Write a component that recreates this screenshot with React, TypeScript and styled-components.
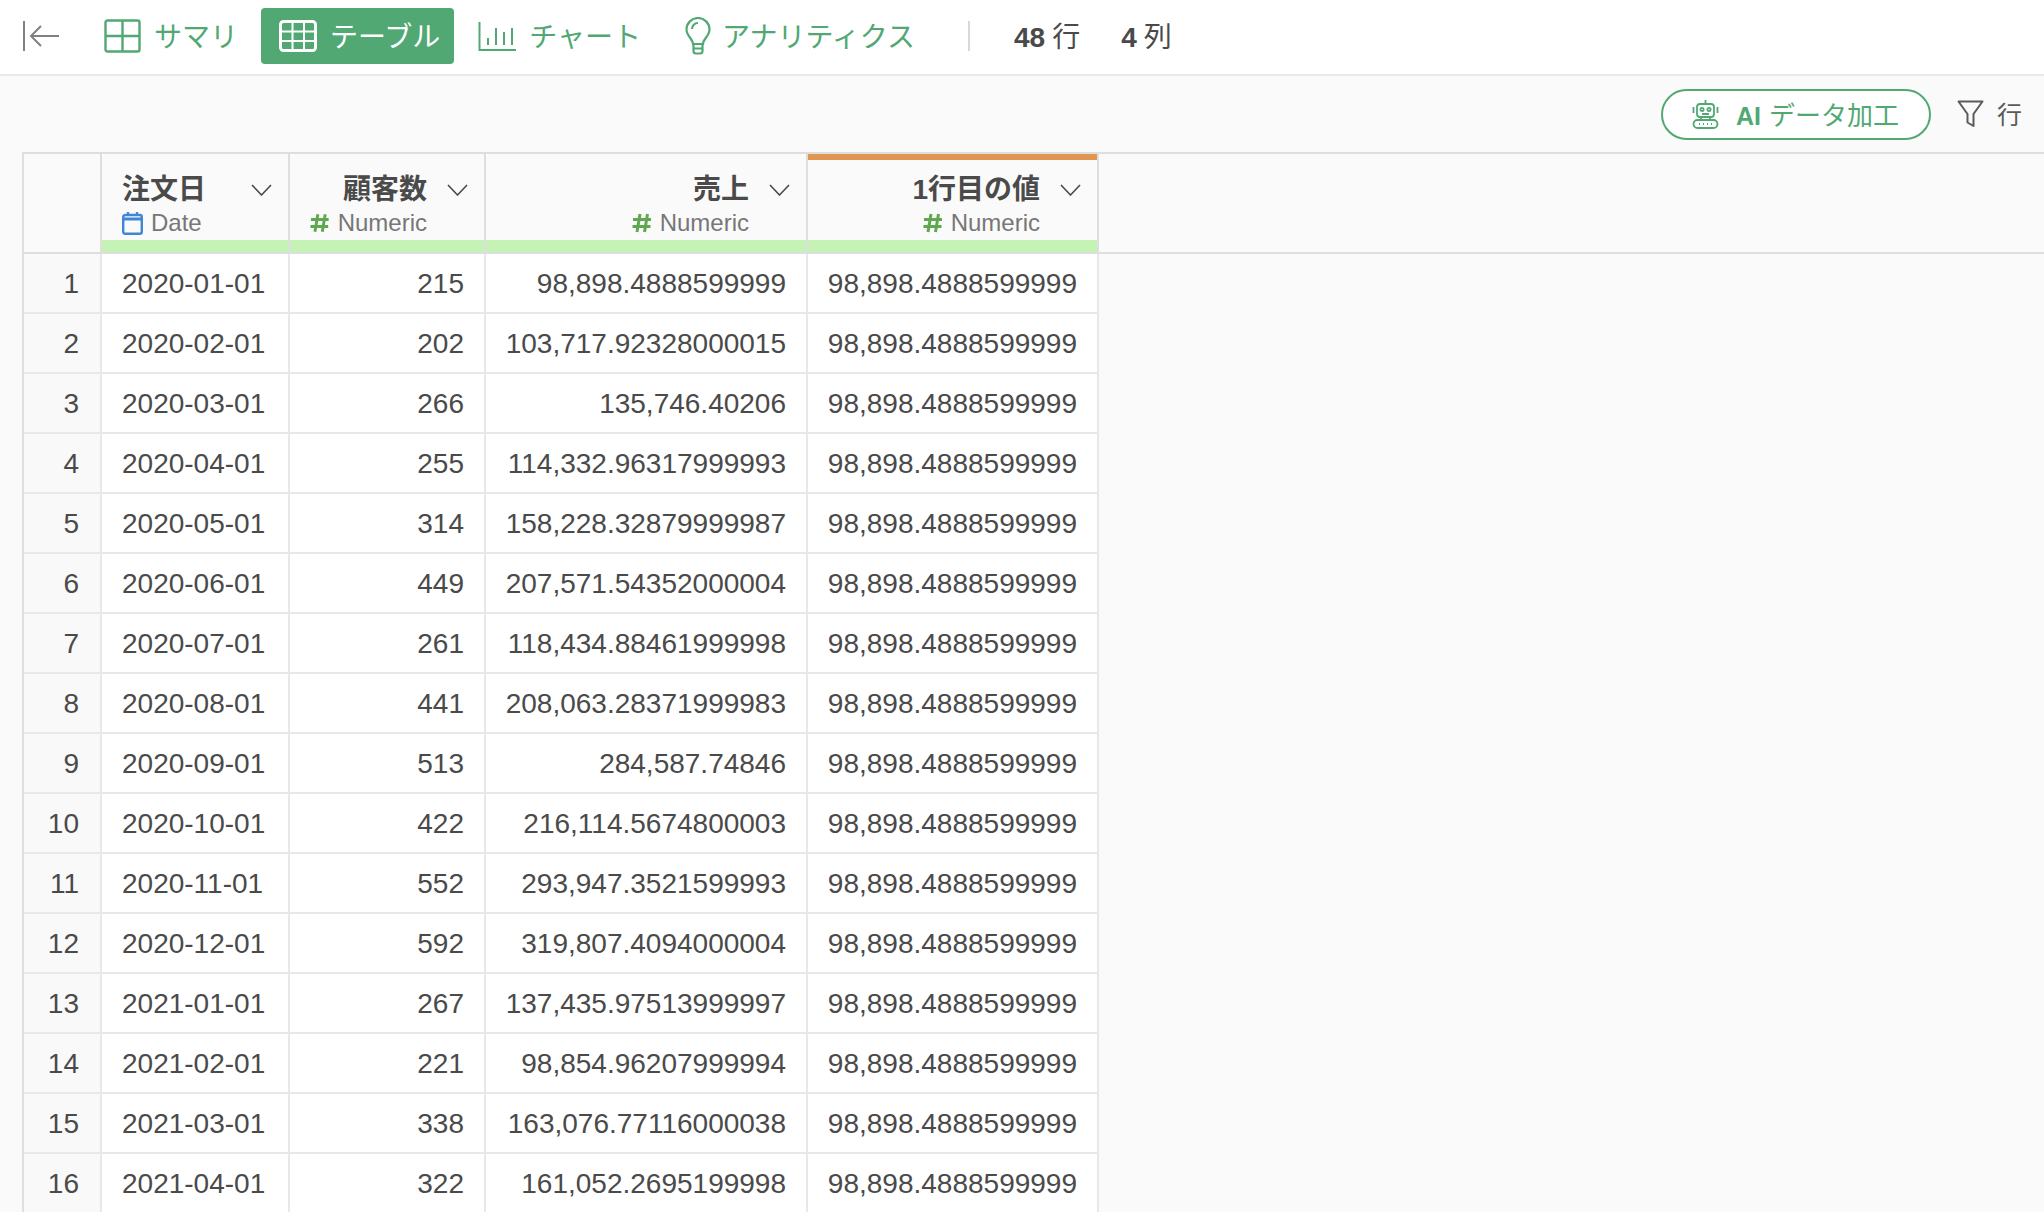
import React from "react";
import styled, { createGlobalStyle } from "styled-components";

const GREEN = "#51a873";
const TEXT = "#4a4a4a";

const GlobalStyle = createGlobalStyle`
  html, body {
    margin: 0;
    padding: 0;
    background: #fafafa;
  }
  * {
    box-sizing: border-box;
  }
`;

const Page = styled.div`
  width: 2044px;
  height: 1212px;
  overflow: hidden;
  background: #fafafa;
  color: ${TEXT};
  font-family: "Liberation Sans", "Noto Sans CJK JP", sans-serif;
  font-size: 28px;
`;

const TopBar = styled.header`
  display: flex;
  align-items: center;
  height: 76px;
  padding: 0 0 2px 22px;
  background: #fff;
  border-bottom: 2px solid #e8e8e8;
`;

const BackButton = styled.button`
  display: flex;
  width: 38px;
  height: 32px;
  margin-right: 29px;
  padding: 0;
  border: 0;
  background: none;
`;

const NavList = styled.nav`
  display: flex;
  align-items: center;
  gap: 9px;
`;

const NavItem = styled.a<{ $active?: boolean }>`
  display: flex;
  align-items: center;
  gap: 13px;
  height: 56px;
  padding: 0 14px 0 ${(p) => (p.$active ? 18 : 15)}px;
  border-radius: 4px;
  background: ${(p) => (p.$active ? GREEN : "transparent")};
  color: ${(p) => (p.$active ? "#fff" : GREEN)};
  font-weight: 400;
  white-space: nowrap;
`;

const Label = styled.span`
  display: block;
  margin-top: -2px;
`;

const Divider = styled.span`
  width: 2px;
  height: 30px;
  margin: 0 44px 0 39px;
  background: #d8d8d8;
`;

const Count = styled.span`
  display: block;
  margin: -2px 41px 0 0;
  font-weight: 400;
  white-space: nowrap;

  b {
    margin-right: 7px;
    font-weight: 700;
  }
`;

const SubBar = styled.div`
  display: flex;
  align-items: center;
  justify-content: flex-end;
  height: 76px;
  padding-right: 22px;
`;

const AiButton = styled.button`
  display: flex;
  align-items: center;
  gap: 17px;
  width: 270px;
  height: 51px;
  padding: 0 0 0 29px;
  border: 2px solid ${GREEN};
  border-radius: 26px;
  background: #fff;
  color: ${GREEN};
  font-family: inherit;
  font-size: 26px;
  font-weight: 400;
  white-space: nowrap;

  b {
    margin-right: 8px;
    font-size: 25px;
    font-weight: 700;
  }
`;

const FilterButton = styled.div`
  display: flex;
  align-items: center;
  gap: 13px;
  margin-left: 26px;
  font-size: 25px;
  font-weight: 400;
  color: #5a5a5a;
`;

const TableArea = styled.div`
  margin-left: 22px;
  border-top: 2px solid #dedede;
  border-left: 2px solid #dedede;
`;

const HeadRow = styled.div`
  display: flex;
  height: 100px;
  border-bottom: 2px solid #dedede;
`;

const HeadIndex = styled.div`
  width: 78px;
  border-right: 2px solid #dedede;
`;

const HeadCell = styled.div<{ $width: number }>`
  display: flex;
  flex-direction: column;
  width: ${(p) => p.$width}px;
  border-right: 2px solid #dedede;
`;

const HeadMark = styled.div<{ $on?: boolean }>`
  height: 6px;
  background: ${(p) => (p.$on ? "#e09550" : "transparent")};
`;

const HeadBody = styled.div`
  flex: 1;
  padding: 10px 16px 0 20px;
`;

const TitleLine = styled.div<{ $left?: boolean }>`
  display: flex;
  align-items: center;
  justify-content: ${(p) => (p.$left ? "space-between" : "flex-end")};
  gap: 20px;
  height: 38px;
  font-size: 28px;
  font-weight: 700;
`;

const TitleText = styled.span`
  display: block;
  margin-top: -5px;
`;

const TypeLine = styled.div<{ $left?: boolean }>`
  display: flex;
  align-items: center;
  justify-content: ${(p) => (p.$left ? "flex-start" : "flex-end")};
  gap: 8px;
  height: 30px;
  margin-right: ${(p) => (p.$left ? 0 : 41)}px;
  font-size: 24px;
  color: #777;
`;

const TypeStrip = styled.div`
  height: 12px;
  background: #c5f3b6;
`;

const DataRow = styled.div`
  display: flex;
  width: 1075px;
  height: 60px;
  border-bottom: 2px solid #e8e8e8;
`;

const IndexCell = styled.div`
  display: flex;
  align-items: center;
  justify-content: flex-end;
  width: 78px;
  padding: 1px 21px 0 0;
  border-right: 2px solid #e8e8e8;
  background: #f9f9f9;
`;

const DataCell = styled.div<{ $width: number; $left?: boolean }>`
  display: flex;
  align-items: center;
  justify-content: ${(p) => (p.$left ? "flex-start" : "flex-end")};
  width: ${(p) => p.$width}px;
  padding: 1px 20px 0;
  border-right: 2px solid #e8e8e8;
  background: #fff;
  white-space: nowrap;
`;

const BulbSvg = styled.svg`
  margin: 0 -2px 0 6px;
`;

const ChevronSvg = styled.svg`
  flex: none;
  margin-top: 2px;
`;

function BackIcon() {
  return (
    <svg width="38" height="32" viewBox="0 0 38 32" fill="none" stroke="#808080" strokeWidth="2">
      <path d="M2 1v30" />
      <path d="M37 16H10" />
      <path d="M19 6 9 16l10 10" />
    </svg>
  );
}

function SummaryIcon() {
  return (
    <svg width="37" height="34" viewBox="0 0 37 34" fill="none" stroke="currentColor" strokeWidth="2.4">
      <rect x="1.500" y="1.500" width="34" height="31" rx="2" />
      <path d="M18.500 2v30M2 17h33" />
    </svg>
  );
}

function TableIcon() {
  return (
    <svg width="38" height="32" viewBox="0 0 38 32" fill="none" stroke="currentColor">
      <rect x="1.500" y="1.500" width="35" height="29" rx="3" strokeWidth="3" />
      <path d="M2 11.500h34M2 21h34M13.500 2v28M25 2v28" strokeWidth="2" />
    </svg>
  );
}

function ChartIcon() {
  return (
    <svg width="38" height="32" viewBox="0 0 38 32" fill="none" stroke="currentColor" strokeWidth="2">
      <path d="M1.500 2v28H38" />
      <path d="M10 25v-7M18 25V8M26 25V12M34 25V8" />
    </svg>
  );
}

function BulbIcon() {
  return (
    <BulbSvg width="26" height="38" viewBox="0 0 26 38" fill="none" stroke="currentColor" strokeWidth="2.2">
      <path d="M8 27c0-5-6.500-8-6.500-14.500a11.500 11.500 0 0 1 23 0C24.500 19 18 22 18 27Z" />
      <path d="M7 12a6 6 0 0 1 6-6" />
      <path d="M8.500 27v7a2.500 2.500 0 0 0 2.500 2.500h4a2.500 2.500 0 0 0 2.500-2.500v-7M8.500 31.500h9" />
    </BulbSvg>
  );
}

function RobotIcon() {
  return (
    <svg width="27" height="30" viewBox="0 0 27 30" fill="none" stroke="currentColor" strokeWidth="1.800">
      <path d="M13.500 1v4" />
      <rect x="5" y="5" width="17" height="13" rx="3" />
      <circle cx="10" cy="10.500" r="1.600" />
      <circle cx="17" cy="10.500" r="1.600" />
      <path d="M10 15h7M1.500 8v6M25.500 8v6" />
      <path d="M9 18v3M18 18v3" />
      <rect x="1.500" y="21" width="24" height="8" rx="4" />
      <path d="M7 25h1M11 25h1M15 25h1M19 25h1" />
    </svg>
  );
}

function FilterIcon() {
  return (
    <svg width="27" height="28" viewBox="0 0 27 28" fill="none" stroke="currentColor" strokeWidth="2" strokeLinejoin="round">
      <path d="M1.500 1.500h24L16.500 14v12l-6-3.500V14Z" />
    </svg>
  );
}

function ChevronIcon() {
  return (
    <ChevronSvg width="21" height="12" viewBox="0 0 21 12" fill="none" stroke="#4a4a4a" strokeWidth="1.600">
      <path d="m1 1 9.500 10L20 1" />
    </ChevronSvg>
  );
}

function CalendarIcon() {
  return (
    <svg width="21" height="24" viewBox="0 0 21 24" fill="none" stroke="#3f87d6" strokeWidth="2.400">
      <rect x="1.200" y="4" width="18.600" height="18.800" rx="2" />
      <path d="M1.500 8h18" strokeWidth="3" />
      <path d="M6 1v4M15 1v4" />
    </svg>
  );
}

function HashIcon() {
  return (
    <svg width="20" height="20" viewBox="0 0 20 20" fill="none" stroke="#5fa84f" strokeWidth="3">
      <path d="M8 1 5 19M15.500 1l-3 18M1 6.500h18M0.500 13.500h18" />
    </svg>
  );
}

const columns = [
  { title: "注文日", type: "Date", width: 188, left: true },
  { title: "顧客数", type: "Numeric", width: 196 },
  { title: "売上", type: "Numeric", width: 322 },
  { title: "1行目の値", type: "Numeric", width: 291, mark: true },
];

const FIRST_VALUE = "98,898.4888599999";

const rows = [
  ["2020-01-01", "215", "98,898.4888599999"],
  ["2020-02-01", "202", "103,717.92328000015"],
  ["2020-03-01", "266", "135,746.40206"],
  ["2020-04-01", "255", "114,332.96317999993"],
  ["2020-05-01", "314", "158,228.32879999987"],
  ["2020-06-01", "449", "207,571.54352000004"],
  ["2020-07-01", "261", "118,434.88461999998"],
  ["2020-08-01", "441", "208,063.28371999983"],
  ["2020-09-01", "513", "284,587.74846"],
  ["2020-10-01", "422", "216,114.5674800003"],
  ["2020-11-01", "552", "293,947.3521599993"],
  ["2020-12-01", "592", "319,807.4094000004"],
  ["2021-01-01", "267", "137,435.97513999997"],
  ["2021-02-01", "221", "98,854.96207999994"],
  ["2021-03-01", "338", "163,076.77116000038"],
  ["2021-04-01", "322", "161,052.2695199998"],
];

function App() {
  return (
    <Page>
      <GlobalStyle />
      <TopBar>
        <BackButton>
          <BackIcon />
        </BackButton>
        <NavList>
          <NavItem>
            <SummaryIcon />
            <Label>サマリ</Label>
          </NavItem>
          <NavItem $active>
            <TableIcon />
            <Label>テーブル</Label>
          </NavItem>
          <NavItem>
            <ChartIcon />
            <Label>チャート</Label>
          </NavItem>
          <NavItem>
            <BulbIcon />
            <Label>アナリティクス</Label>
          </NavItem>
        </NavList>
        <Divider />
        <Count>
          <b>48</b>行
        </Count>
        <Count>
          <b>4</b>列
        </Count>
      </TopBar>
      <SubBar>
        <AiButton>
          <RobotIcon />
          <Label>
            <b>AI</b>データ加工
          </Label>
        </AiButton>
        <FilterButton>
          <FilterIcon />
          <Label>行</Label>
        </FilterButton>
      </SubBar>
      <TableArea>
        <HeadRow>
          <HeadIndex />
          {columns.map((col) => (
            <HeadCell key={col.title} $width={col.width}>
              <HeadMark $on={col.mark} />
              <HeadBody>
                <TitleLine $left={col.left}>
                  <TitleText>{col.title}</TitleText>
                  <ChevronIcon />
                </TitleLine>
                <TypeLine $left={col.left}>
                  {col.left ? <CalendarIcon /> : <HashIcon />}
                  {col.type}
                </TypeLine>
              </HeadBody>
              <TypeStrip />
            </HeadCell>
          ))}
        </HeadRow>
        {rows.map((row, i) => (
          <DataRow key={row[0]}>
            <IndexCell>{i + 1}</IndexCell>
            <DataCell $width={188} $left>
              {row[0]}
            </DataCell>
            <DataCell $width={196}>{row[1]}</DataCell>
            <DataCell $width={322}>{row[2]}</DataCell>
            <DataCell $width={291}>{FIRST_VALUE}</DataCell>
          </DataRow>
        ))}
      </TableArea>
    </Page>
  );
}

export default App;
